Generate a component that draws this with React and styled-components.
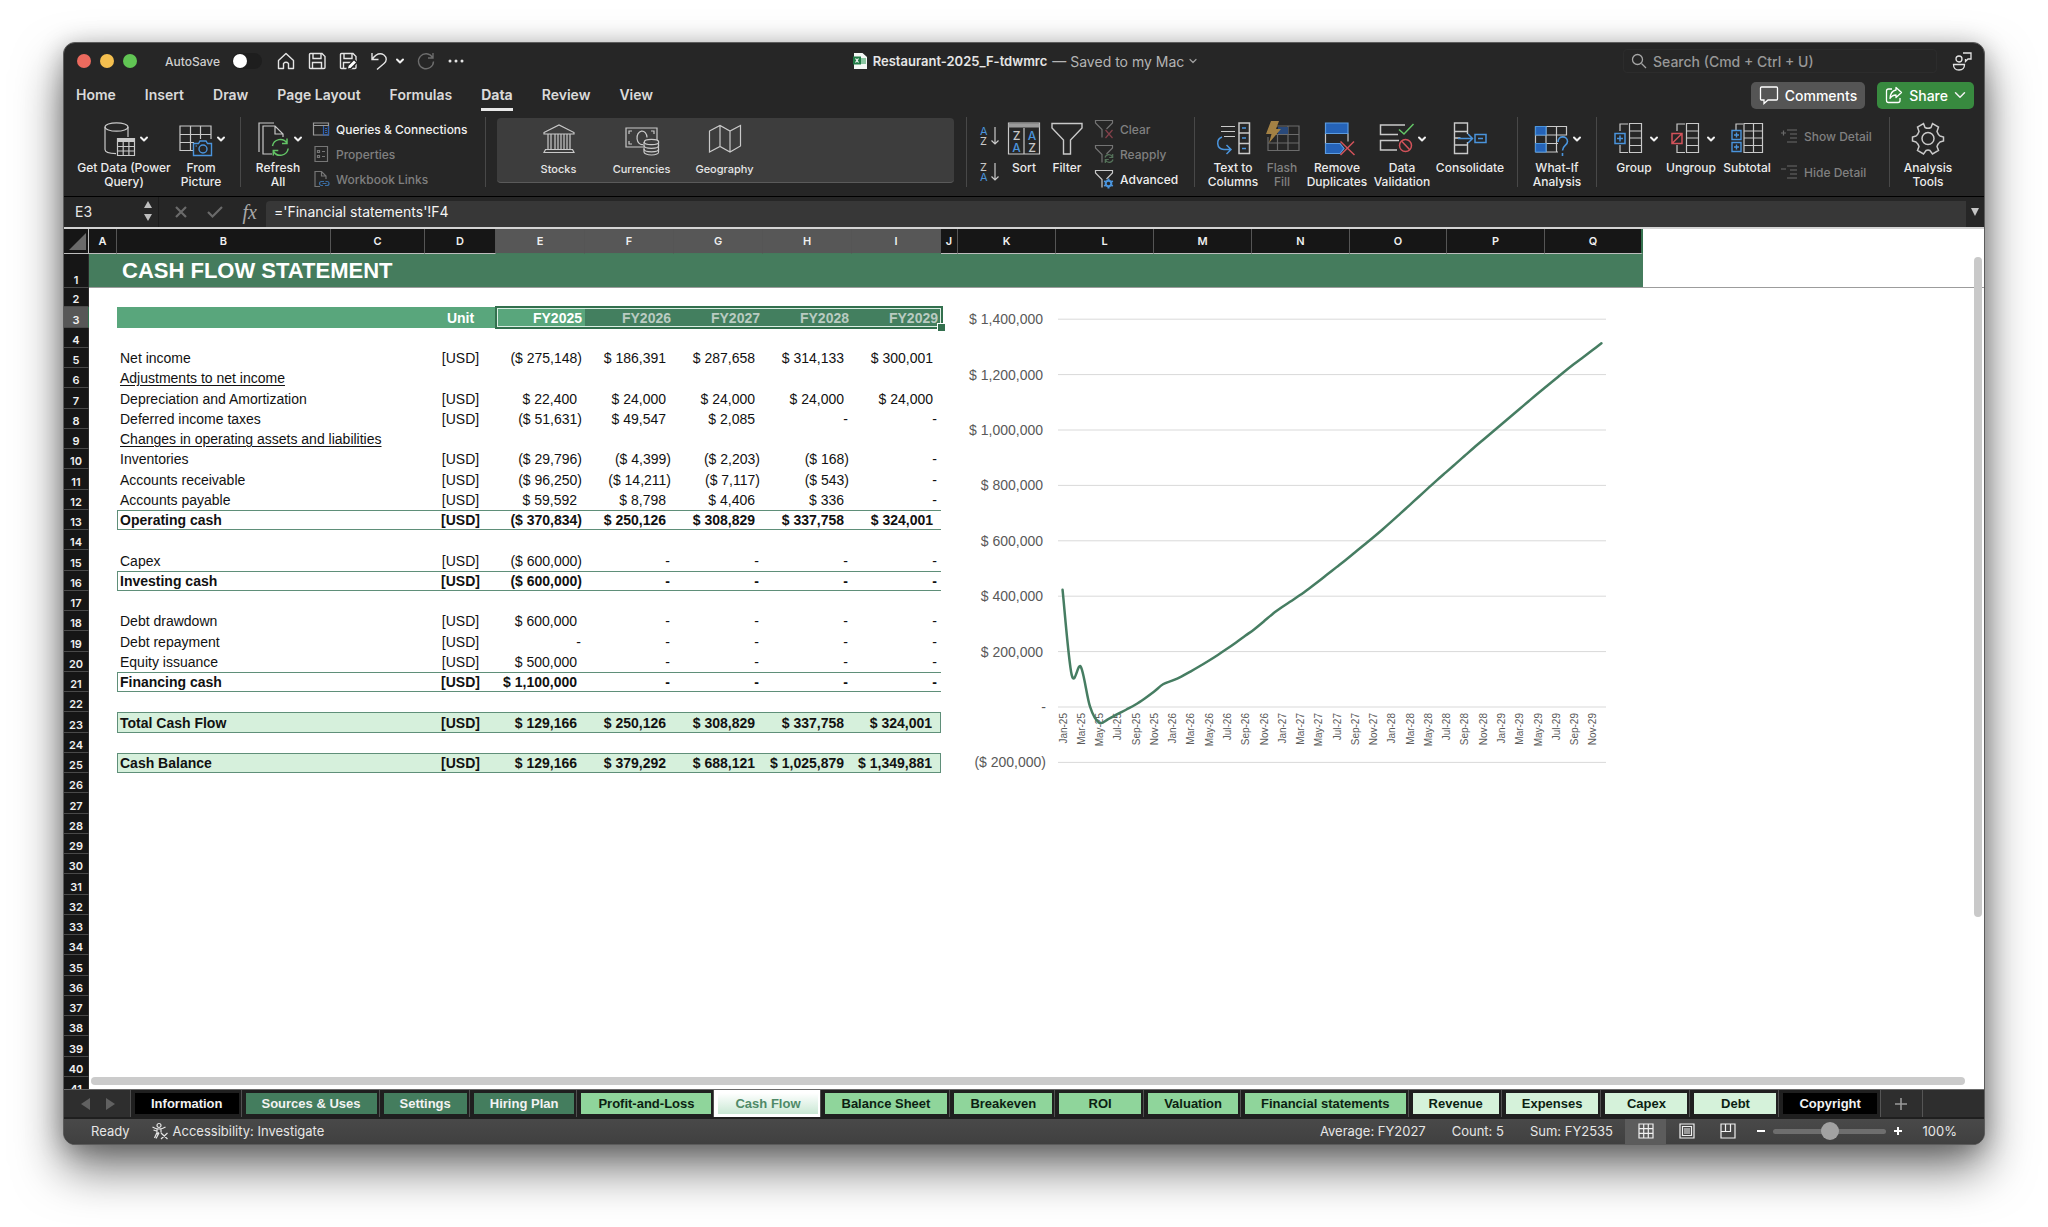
import React, { useState } from "react";
import styled, { createGlobalStyle } from "styled-components";

const UI_FONT = `Inter, "Liberation Sans", sans-serif`;
const CELL_FONT = `"Liberation Sans", Arial, sans-serif`;

const LINE = "#c9c9c9";
const BLUE = "#4a94dc";
const GREEN = "#63c466";
const RED = "#d2525a";

const ribbonTabs = [
  "Home",
  "Insert",
  "Draw",
  "Page Layout",
  "Formulas",
  "Data",
  "Review",
  "View",
];

const columns = [
  ["A", 28],
  ["B", 214],
  ["C", 94],
  ["D", 71],
  ["E", 89],
  ["F", 89],
  ["G", 89],
  ["H", 89],
  ["I", 89],
  ["J", 17],
  ["K", 98],
  ["L", 98],
  ["M", 98],
  ["N", 98],
  ["O", 97],
  ["P", 98],
  ["Q", 98],
];

const selectedColumns = "EFGHI";

const years = ["FY2025", "FY2026", "FY2027", "FY2028", "FY2029"];

const statement = {
  5: {
    label: "Net income",
    values: ["($ 275,148)", "$ 186,391", "$ 287,658", "$ 314,133", "$ 300,001"],
  },
  6: { label: "Adjustments to net income", kind: "heading" },
  7: {
    label: "Depreciation and Amortization",
    values: ["$ 22,400", "$ 24,000", "$ 24,000", "$ 24,000", "$ 24,000"],
  },
  8: {
    label: "Deferred income taxes",
    values: ["($ 51,631)", "$ 49,547", "$ 2,085", "-", "-"],
  },
  9: { label: "Changes in operating assets and liabilities", kind: "heading" },
  10: {
    label: "Inventories",
    values: ["($ 29,796)", "($ 4,399)", "($ 2,203)", "($ 168)", "-"],
  },
  11: {
    label: "Accounts receivable",
    values: ["($ 96,250)", "($ 14,211)", "($ 7,117)", "($ 543)", "-"],
  },
  12: {
    label: "Accounts payable",
    values: ["$ 59,592", "$ 8,798", "$ 4,406", "$ 336", "-"],
  },
  13: {
    label: "Operating cash",
    kind: "subtotal",
    values: ["($ 370,834)", "$ 250,126", "$ 308,829", "$ 337,758", "$ 324,001"],
  },
  15: { label: "Capex", values: ["($ 600,000)", "-", "-", "-", "-"] },
  16: {
    label: "Investing cash",
    kind: "subtotal",
    values: ["($ 600,000)", "-", "-", "-", "-"],
  },
  18: { label: "Debt drawdown", values: ["$ 600,000", "-", "-", "-", "-"] },
  19: { label: "Debt repayment", values: ["-", "-", "-", "-", "-"] },
  20: { label: "Equity issuance", values: ["$ 500,000", "-", "-", "-", "-"] },
  21: {
    label: "Financing cash",
    kind: "subtotal",
    values: ["$ 1,100,000", "-", "-", "-", "-"],
  },
  23: {
    label: "Total Cash Flow",
    kind: "total",
    values: ["$ 129,166", "$ 250,126", "$ 308,829", "$ 337,758", "$ 324,001"],
  },
  25: {
    label: "Cash Balance",
    kind: "total",
    values: [
      "$ 129,166",
      "$ 379,292",
      "$ 688,121",
      "$ 1,025,879",
      "$ 1,349,881",
    ],
  },
};

const sheets = [
  { name: "Information", tone: "black" },
  { name: "Sources & Uses", tone: "dark" },
  { name: "Settings", tone: "dark" },
  { name: "Hiring Plan", tone: "dark" },
  { name: "Profit-and-Loss", tone: "mid", roomy: true },
  { name: "Cash Flow", tone: "active", roomy: true },
  { name: "Balance Sheet", tone: "mid", roomy: true },
  { name: "Breakeven", tone: "mid" },
  { name: "ROI", tone: "mid" },
  { name: "Valuation", tone: "mid" },
  { name: "Financial statements", tone: "mid" },
  { name: "Revenue", tone: "light" },
  { name: "Expenses", tone: "light" },
  { name: "Capex", tone: "light" },
  { name: "Debt", tone: "light" },
  { name: "Copyright", tone: "black" },
];

// monthly cash balance, thousands of dollars, Jan-25 to Dec-29
const balance = [
  423, 116, 145, 2, -57, -44, -26, -9, 9, 31, 55, 82, 95, 110, 128, 147, 167,
  188, 210, 233, 257, 281, 308, 336, 360, 382, 404, 428, 453, 479, 505, 531,
  558, 585, 612, 640, 669, 699, 729, 759, 789, 819, 848, 877, 906, 935, 963,
  991, 1019, 1047, 1075, 1103, 1131, 1158, 1185, 1212, 1238, 1263, 1288, 1313,
];

const axisLabels = [
  "$ 1,400,000",
  "$ 1,200,000",
  "$ 1,000,000",
  "$ 800,000",
  "$ 600,000",
  "$ 400,000",
  "$ 200,000",
  "-",
  "($ 200,000)",
];

/* ---------- icons ---------- */

const Chevron = ({ size = 8, color = "#f0f0f0", weight = 2 }) => (
  <svg width={size} height={size} viewBox="0 0 8 8" fill="none">
    <path
      d="M1 2.5 4 5.5 7 2.5"
      stroke={color}
      strokeWidth={weight}
      strokeLinecap="round"
      strokeLinejoin="round"
    />
  </svg>
);

const Icon = ({ w = 34, h = 34, children, color = LINE, weight = 1.2 }) => (
  <svg
    width={w}
    height={h}
    viewBox={`0 0 ${w} ${h}`}
    fill="none"
    stroke={color}
    strokeWidth={weight}
    aria-hidden="true"
  >
    {children}
  </svg>
);

const GetDataIcon = () => (
  <Icon>
    <ellipse cx="15.5" cy="5" rx="11.5" ry="4.2" />
    <path d="M4 5v22.500c0 2.200 4 4 11 4.200M27 5v10" />
    <path d="M16.500 16.500h17v17h-17z" fill="#262626" />
    <path d="M16.500 18.500h17" strokeWidth="3" />
    <path d="M16.500 24.500h17M16.500 29h17M22.200 18v15M27.900 18v15" />
  </Icon>
);

const FromPictureIcon = () => (
  <Icon>
    <path d="M15 28.500H2V4h31v13M2 12.500h31M2 20.500h14M12.500 4v24.500M22.500 4v13" />
    <path
      d="M15.500 21.500h5l1.500-2.500h6l1.500 2.500h4v12h-18z"
      stroke={BLUE}
      fill="#262626"
      strokeWidth="1.400"
    />
    <circle cx="25" cy="27" r="4" stroke={BLUE} strokeWidth="1.400" />
    <path d="M17.500 24h1.500" stroke={BLUE} />
  </Icon>
);

const RefreshIcon = () => (
  <Icon>
    <path d="M4 30V1h15" />
    <path d="M17 32H8V4h12l8 8v3M20 4v8h8" />
    <path
      d="M17.500 24a8 8 0 0 1 14.500-3M32 16.500v5h-5M33.200 26.500a8 8 0 0 1-14.700 3M18.300 33.500v-5h5"
      stroke={GREEN}
      strokeWidth="1.500"
    />
  </Icon>
);

const QueriesIcon = () => (
  <Icon w={18} h={18} color="#9a9a9a">
    <path d="M1.500 3h15v12h-15zM1.500 5.500h15" />
    <path
      d="M11.500 6v9h5V6M13 8.500h2M13 10.500h2M13 12.500h2"
      stroke="#2f62b4"
    />
  </Icon>
);

const PropertiesIcon = () => (
  <Icon w={18} h={18} color="#767676">
    <path d="M3 1.500h12.500v15H3z" />
    <path d="M5.500 5.500h2v2h-2zM5.500 10.500h2v2h-2zM10 6.500h3M10 11.500h3" />
  </Icon>
);

const LinksIcon = () => (
  <Icon w={18} h={18} color="#767676">
    <path d="M8 16.500H3v-15h6.500l4.500 4.500v3M9.500 1.500V6H14" />
    <path
      d="M11 15.500H9.500a2 2 0 0 1 0-4h2.500M13.500 11.500h1.500a2 2 0 0 1 0 4H13M10.500 13.500h4"
      stroke="#3a6ea5"
    />
  </Icon>
);

const StocksIcon = () => (
  <Icon>
    <path d="M2 10.500 17 3l15 7.500v1.500H2zM3.500 27.500h27l1.500 3H2z" />
    <path d="M6 12v15.500M9 12v15.500M13 12v15.500M16 12v15.500M19 12v15.500M22 12v15.500M25 12v15.500M28 12v15.500" />
  </Icon>
);

const CurrencyIcon = () => (
  <Icon>
    <path d="M18 25H1V6h31v12" />
    <path d="M4 12V9h3M4 19v3h3M26 9h3v3" />
    <path d="M18 22.500a5 6.800 0 1 1 4-7" />
    <path
      d="M19 20v10c0 1.500 3 3 7.500 3s7.500-1.500 7-3V20"
      fill="#3d3d3d"
    />
    <ellipse cx="26.500" cy="20" rx="7.200" ry="2.700" fill="#3d3d3d" />
    <path d="M19 23.500c0 1.500 3 2.800 7.500 2.800s7.200-1.300 7.200-2.800M19 27c0 1.500 3 2.800 7.500 2.800s7.200-1.300 7.200-2.800" />
  </Icon>
);

const MapIcon = () => (
  <Icon>
    <path d="M1.500 9 12 3.500l10 5.500L32.500 3.500V24L22 30l-10-5.500L1.500 30zM12 3.500v21M22 9v21" />
  </Icon>
);

const SortAzIcon = ({ top, bottom, flip }) => (
  <svg width="20" height="22" viewBox="0 0 20 22" fill="none">
    <text
      x="0"
      y="9"
      fontSize="11"
      fontFamily="Inter, sans-serif"
      fill={flip ? LINE : BLUE}
    >
      {top}
    </text>
    <text
      x="0"
      y="19"
      fontSize="11"
      fontFamily="Inter, sans-serif"
      fill={flip ? BLUE : LINE}
    >
      {bottom}
    </text>
    <path d="M15 1v17M11.500 14.500 15 18l3.500-3.500" stroke={LINE} strokeWidth="1.200" />
  </svg>
);

const SortIcon = () => (
  <Icon>
    <path d="M1.500 1h31v31h-31zM17 6v26" />
    <path d="M1.500 3.500h31" strokeWidth="4" stroke="#9b9b9b" />
    <g
      stroke="none"
      fontSize="12"
      fontFamily="Inter, sans-serif"
      textAnchor="middle"
    >
      <text x="9.500" y="18" fill={LINE}>
        Z
      </text>
      <text x="9.500" y="30" fill={BLUE}>
        A
      </text>
      <text x="25" y="18" fill={BLUE}>
        A
      </text>
      <text x="25" y="30" fill={LINE}>
        Z
      </text>
    </g>
  </Icon>
);

const FilterIcon = () => (
  <Icon weight={1.4}>
    <path d="M2 1.500h30v4.500L20.500 18v14h-7V18L2 6z" />
  </Icon>
);

const SmallFilterIcon = ({ mark, dim }) => (
  <Icon w={20} h={20} color={dim ? "#747474" : LINE}>
    <path d="M8 18.500V10.500L1.500 4V1.500h17V4l-6 6" />
    {mark === "clear" && (
      <path d="m11.500 11 7 8M18.500 11l-7 8" stroke="#84404a" />
    )}
    {mark === "reapply" && (
      <path
        d="M11 13.500a4 4 0 0 1 7.500-.5M18.700 10v3.500h-3.500M19 15.500a4 4 0 0 1-7.500.5M11.300 19v-3.500h3.500"
        stroke="#55735a"
      />
    )}
    {mark === "gear" && (
      <g stroke={BLUE}>
        <circle cx="14.500" cy="14.500" r="2.800" strokeWidth="2" />
        <path
          d="M14.500 9.500v2M14.500 17.500v2M10.200 12l1.700 1M17.100 16l1.700 1M18.800 12l-1.700 1M11.900 16l-1.700 1"
          strokeWidth="2"
        />
      </g>
    )}
  </Icon>
);

const TextToColumnsIcon = () => (
  <Icon>
    <path d="M5 4.500h14M5 9.500h14M8 14.500h11" />
    <path d="M23 1h10.500v30.500H23zM23 11h10.500M23 21.500h10.500" strokeWidth="1.500" />
    <path
      d="M6 15c-6 2-6 12 2 12.500h6M10.500 23l4.500 4.500-4.500 4.500M26 6h4M26 16h4M26 26.500h4"
      stroke={BLUE}
      strokeWidth="1.500"
    />
  </Icon>
);

const FlashFillIcon = () => (
  <Icon color="#6b6b6b">
    <path d="M11 4h23v24.500H3V15M3 21h31M8 12.500h26M12.500 12v16.500M23 4v24.500" />
    <path d="M13 5h10v7H13z" fill="#29497a" stroke="none" />
    <path
      d="M6-1h8l-3 8h5L4 21l2.500-9H1z"
      fill="#a38144"
      stroke="none"
    />
  </Icon>
);

const RemoveDuplicatesIcon = () => (
  <Icon>
    <path d="M5.500 11.500v10M28 11.500v8" />
    <path
      d="M5.500 1H28v10.500H5.500zM5.500 21.500H20l4 5-4 5H5.500z"
      fill="#2563b8"
      stroke="#5b9be0"
    />
    <path d="m20.500 19.500 14 13.500M34 19.500 20.500 33" stroke={RED} strokeWidth="1.500" />
  </Icon>
);

const DataValidationIcon = () => (
  <Icon>
    <path d="M19 12.500H1.500V3H26M18 28H1.500v-9.500H20" strokeWidth="1.500" />
    <path d="m20 7.500 5 4.500L34.500 2" stroke={GREEN} strokeWidth="1.500" />
    <circle cx="26.500" cy="23.500" r="6" stroke={RED} strokeWidth="1.500" />
    <path d="m22.500 19 8.500 9" stroke={RED} strokeWidth="1.500" />
  </Icon>
);

const ConsolidateIcon = () => (
  <Icon>
    <path d="M1.500 1h13v8.500h-13zM1.500 23h13v8.500h-13zM8 9.500h6.500V12M8 23h6.500v-3M1.500 9.500V23M1.500 16h6" strokeWidth="1.400" />
    <path
      d="M5 16.500h14.500M15 12l4.500 4.500L15 21M22 12.500h11v8H22zM25 16.500h5"
      stroke={BLUE}
      strokeWidth="1.500"
    />
  </Icon>
);

const WhatIfIcon = () => (
  <Icon>
    <path d="M1.500 4.500h31v9M1.500 13h31M1.500 21.500H24M1.500 30H24M12 4.500V30M22.500 4.500V30M1.500 4.500V30" />
    <path d="M1.500 4.500H12V13H1.500zM1.500 21.500H12V30H1.500z" fill="#2563b8" stroke={BLUE} />
    <path
      d="M24 20c0-7 9.500-6.500 9.500-.5 0 4-5 4-5 9M28.500 31v3"
      stroke={BLUE}
      strokeWidth="1.600"
    />
  </Icon>
);

const GroupIcon = ({ removed }) => (
  <Icon>
    <path d="M18.500 1.500h12v29h-12zM18.500 9h12M18.500 16h12M18.500 23.500h12M17 2H9v7M9 23v7.500h8" />
    <path
      d={removed ? "M4 11.500h10v10H4zM4 21.500l10-10" : "M4 11.500h10v10H4zM9 13.500v6M6 16.500h6"}
      stroke={removed ? RED : BLUE}
      strokeWidth="1.500"
    />
  </Icon>
);

const SubtotalIcon = () => (
  <Icon>
    <path d="M14 1.500h18.500v29H14zM14 9h18.500M14 16h18.500M14 23.500h18.500M23.500 1.500v29M13 2H6v6" />
    <path
      d="M2 8.500h9v9H2zM6.500 10.500v5M4 13h5M2 20.500h9v9H2zM6.500 22.500v5M4 25h5"
      stroke={BLUE}
      strokeWidth="1.400"
    />
  </Icon>
);

const DetailIcon = ({ hide }) => (
  <Icon w={18} h={16} color="#6a6a6a">
    <path d="M7 2h10M10 6h7M10 10h7M7 14h10M1 5h5" />
    {!hide && <path d="M3.500 2.500v5" />}
  </Icon>
);

const GearIcon = () => (
  <Icon weight={1.5}>
    <circle cx="17" cy="16.500" r="6" />
    <path d="m12.500 1.500 1.500 4q3 1.500 6 0l1.500-4 6 3.500-1.500 4.500q1 3 3 4.500l3.500 1v4l-3.500 1q-2 1.500-3 4.500l1.500 4-6 3.500-2.500-3.500q-2-1-4 0L12.500 32l-6-3.500 1.500-4q-1-3-3-4.500l-3.500-1v-4l3.500-1q2-1.500 3-4.500L6.500 5z" />
  </Icon>
);

const HomeIcon = () => (
  <Icon w={18} h={18} color="#e4e4e4" weight={1.4}>
    <path d="M1.500 8.500 9 1.500l7.500 7v8h-5v-5q-2.500-2.500-5 0v5h-5z" strokeLinejoin="round" />
  </Icon>
);

const SaveIcon = ({ edit }) => (
  <Icon w={18} h={18} color="#e4e4e4" weight={1.4}>
    <path d="M1.500 2.500q0-1 1-1h11.500l3 3v11q0 1-1 1H2.500q-1 0-1-1zM5 1.500v5h8v-5M4.500 16.500V10.500h9v6" />
    {edit && (
      <path d="m8 17.500 1-4 6-6 3 3-6 6z" fill="#fff" stroke="#262626" />
    )}
  </Icon>
);

const UndoIcon = () => (
  <Icon w={18} h={18} color="#e4e4e4" weight={1.4}>
    <path d="M2 1v6.500h6.500M2 7.500C6 2 10 .5 14 3c3 2.500 3 6 0 8.500l-7 6" />
  </Icon>
);

const RedoIcon = () => (
  <Icon w={18} h={18} color="#6c6c6c" weight={1.4}>
    <path d="M16 1v5h-5M15.500 5.500A7.500 7.500 0 1 0 16.500 9.500" />
  </Icon>
);

const MoreIcon = () => (
  <Icon w={16} h={18} color="none">
    <g fill="#e4e4e4">
      <circle cx="2" cy="9" r="1.500" />
      <circle cx="8" cy="9" r="1.500" />
      <circle cx="14" cy="9" r="1.500" />
    </g>
  </Icon>
);

const WorkbookIcon = () => (
  <svg width="16" height="18" viewBox="0 0 16 18">
    <path d="M2 1h8.500L15 5v12H2z" fill="#f4f8f5" />
    <path d="M9 6h5v6H9z" fill="#8cc7a2" />
    <path d="M1 4.500h8v8H1z" fill="#1f7a45" />
    <path d="m3.500 6.500 3 4M6.500 6.500l-3 4" stroke="#fff" strokeWidth="1.200" />
  </svg>
);

const SearchIcon = () => (
  <Icon w={16} h={16} color="#a5a5a5" weight={1.3}>
    <circle cx="6.500" cy="6.500" r="5" />
    <path d="m10.500 10.500 4.500 4.500" />
  </Icon>
);

const PresenceIcon = () => (
  <Icon w={20} h={20} color="#e4e4e4" weight={1.3}>
    <circle cx="7" cy="8" r="3" />
    <path d="M1.500 13.500h11q0 5.500-5.500 5.500t-5.500-5.500zM11 2h8v6h-3l-2.500 2.500V8" />
  </Icon>
);

const CommentIcon = () => (
  <Icon w={20} h={20} color="#fff" weight={1.3}>
    <path d="M2.500 2h15q1 0 1 1v11q0 1-1 1H9l-4 3.500V15H2.500q-1 0-1-1V3q0-1 1-1z" />
  </Icon>
);

const ShareIcon = () => (
  <Icon w={18} h={18} color="#fff" weight={1.3}>
    <path d="M7 3H3.500Q1.500 3 1.500 5v9.500q0 2 2 2H13q2 0 2-2V12" />
    <path d="M11 1.500 16.500 6.500 11 11.500V9q-4 0-6 3.500Q5.500 5 11 4z" strokeLinejoin="round" />
  </Icon>
);

const AccessibilityIcon = () => (
  <Icon w={18} h={18} color="#e4e4e4">
    <circle cx="8" cy="3.500" r="2" />
    <path d="M1.500 5q3 2 6.500 2t6.500-2M6 7v3.500L3.500 16M10 7v3.500M2.500 8l3 1M6 12l2-1.500M10 11l6.500 6M16.500 11 10 17M5 16.500 8 11" />
  </Icon>
);

const ViewIcon = ({ kind }) => (
  <Icon w={16} h={16} color="#f0f0f0">
    <path d="M1 1h14v14H1z" />
    {kind === "normal" && (
      <path d="M5.700 1v14M10.300 1v14M1 5.700h14M1 10.300h14" />
    )}
    {kind === "layout" && (
      <path d="M3.500 3.500h9v9h-9zM5 6h6M5 8h6M5 10h6" />
    )}
    {kind === "break" && <path d="M5.500 1v7.500M1 8.500h9.500V1" />}
  </Icon>
);

/* ---------- chart ---------- */

const PLOT = { left: 101, right: 649, zero: 403, step: 55.4 };

const monthName = (i) =>
  ["Jan", "Mar", "May", "Jul", "Sep", "Nov"][(i / 2) % 6] +
  "-" +
  (25 + Math.floor(i / 12));

const monthX = (i) =>
  PLOT.left + ((i + 0.5) * (PLOT.right - PLOT.left)) / balance.length;

function smoothLine() {
  const pts = balance.map((v, i) => [
    monthX(i),
    PLOT.zero - (v / 200) * PLOT.step,
  ]);
  let d = `M${pts[0][0]} ${pts[0][1]}`;
  for (let i = 0; i < pts.length - 1; i++) {
    const p0 = pts[i - 1] || pts[i];
    const p1 = pts[i];
    const p2 = pts[i + 1];
    const p3 = pts[i + 2] || p2;
    const c1 = [p1[0] + (p2[0] - p0[0]) / 6, p1[1] + (p2[1] - p0[1]) / 6];
    const c2 = [p2[0] - (p3[0] - p1[0]) / 6, p2[1] - (p3[1] - p1[1]) / 6];
    d += ` C${c1[0]} ${c1[1]} ${c2[0]} ${c2[1]} ${p2[0]} ${p2[1]}`;
  }
  return d;
}

function BalanceChart() {
  return (
    <Chart viewBox="0 0 660 480" role="img" aria-label="Cash balance by month">
      {axisLabels.map((label, i) => {
        const y = PLOT.zero + (i - 7) * PLOT.step;
        return (
          <g key={label}>
            <line x1={PLOT.left} x2={PLOT.right} y1={y} y2={y} />
            <text
              className="amount"
              x={label.startsWith("(") || label === "-" ? 89 : 86}
              y={y + 5}
            >
              {label}
            </text>
          </g>
        );
      })}
      {balance.map(
        (_, i) =>
          i % 2 === 0 && (
            <text
              key={i}
              className="month"
              transform={`translate(${monthX(i) + 4} ${PLOT.zero + 6}) rotate(-90)`}
            >
              {monthName(i)}
            </text>
          ),
      )}
      <path d={smoothLine()} />
    </Chart>
  );
}

/* ---------- ribbon pieces ---------- */

function Command({ icon, label, width, menu, disabled }) {
  return (
    <CommandButton type="button" $width={width} disabled={disabled}>
      <span className="icon">
        {icon}
        {menu && <Chevron />}
      </span>
      <span>{label}</span>
    </CommandButton>
  );
}

function Option({ icon, label, disabled }) {
  return (
    <OptionButton type="button" disabled={disabled}>
      {icon}
      {label}
    </OptionButton>
  );
}

function TitleBar() {
  return (
    <TitleRow>
      <Cluster>
        <Lights>
          <Light aria-label="Close" $color="#ec6a5e" />
          <Light aria-label="Minimise" $color="#f4bf4f" />
          <Light aria-label="Zoom" $color="#61c554" />
        </Lights>
        <AutoSave>
          AutoSave
          <input type="checkbox" role="switch" />
        </AutoSave>
        <QuickBar>
          <IconButton aria-label="Home">
            <HomeIcon />
          </IconButton>
          <IconButton aria-label="Save">
            <SaveIcon />
          </IconButton>
          <IconButton aria-label="Save as">
            <SaveIcon edit />
          </IconButton>
          <IconButton aria-label="Undo">
            <UndoIcon />
            <Chevron />
          </IconButton>
          <IconButton aria-label="Redo" disabled>
            <RedoIcon />
          </IconButton>
          <IconButton aria-label="More">
            <MoreIcon />
          </IconButton>
        </QuickBar>
      </Cluster>
      <DocumentTitle>
        <WorkbookIcon />
        Restaurant-2025_F-tdwmrc
        <span>— Saved to my Mac</span>
        <Chevron color="#a0a0a0" weight={1.2} />
      </DocumentTitle>
      <Cluster $end>
        <SearchBox>
          <SearchIcon />
          <input type="search" aria-label="Search" placeholder="Search (Cmd + Ctrl + U)" />
        </SearchBox>
        <IconButton aria-label="People">
          <PresenceIcon />
        </IconButton>
      </Cluster>
    </TitleRow>
  );
}

function Ribbon() {
  return (
    <RibbonRow>
      <Group>
        <Command icon={<GetDataIcon />} label="Get Data (Power Query)" width={94} menu />
        <Command icon={<FromPictureIcon />} label="From Picture" width={60} menu />
      </Group>
      <Group>
        <Command icon={<RefreshIcon />} label="Refresh All" width={56} menu />
        <OptionList $width={170}>
          <Option icon={<QueriesIcon />} label="Queries & Connections" />
          <Option icon={<PropertiesIcon />} label="Properties" disabled />
          <Option icon={<LinksIcon />} label="Workbook Links" disabled />
        </OptionList>
      </Group>
      <Group $grow>
        <Gallery>
          <DataType>
            <StocksIcon />
            Stocks
          </DataType>
          <DataType>
            <CurrencyIcon />
            Currencies
          </DataType>
          <DataType>
            <MapIcon />
            Geography
          </DataType>
        </Gallery>
      </Group>
      <Group>
        <SortColumn>
          <IconButton aria-label="Sort ascending">
            <SortAzIcon top="A" bottom="Z" />
          </IconButton>
          <IconButton aria-label="Sort descending">
            <SortAzIcon top="Z" bottom="A" flip />
          </IconButton>
        </SortColumn>
        <Command icon={<SortIcon />} label="Sort" width={44} />
        <Command icon={<FilterIcon />} label="Filter" width={42} />
        <OptionList $width={97}>
          <Option icon={<SmallFilterIcon mark="clear" dim />} label="Clear" disabled />
          <Option icon={<SmallFilterIcon mark="reapply" dim />} label="Reapply" disabled />
          <Option icon={<SmallFilterIcon mark="gear" />} label="Advanced" />
        </OptionList>
      </Group>
      <Group>
        <Command icon={<TextToColumnsIcon />} label="Text to Columns" width={58} />
        <Command icon={<FlashFillIcon />} label="Flash Fill" width={40} disabled />
        <Command icon={<RemoveDuplicatesIcon />} label="Remove Duplicates" width={70} />
        <Command icon={<DataValidationIcon />} label="Data Validation" width={60} menu />
        <Command icon={<ConsolidateIcon />} label="Consolidate" width={76} />
      </Group>
      <Group>
        <Command icon={<WhatIfIcon />} label="What-If Analysis" width={60} menu />
      </Group>
      <Group>
        <Command icon={<GroupIcon />} label="Group" width={56} menu />
        <Command icon={<GroupIcon removed />} label="Ungroup" width={58} menu />
        <Command icon={<SubtotalIcon />} label="Subtotal" width={54} />
        <OptionList $width={106} $spread>
          <Option icon={<DetailIcon />} label="Show Detail" disabled />
          <Option icon={<DetailIcon hide />} label="Hide Detail" disabled />
        </OptionList>
      </Group>
      <Group>
        <Command icon={<GearIcon />} label="Analysis Tools" width={58} />
      </Group>
    </RibbonRow>
  );
}

/* ---------- sheet ---------- */

const align = (value) => {
  if (value === "-") return "dash";
  return value.startsWith("(") ? "negative" : "positive";
};

function SheetRow({ number }) {
  const row = statement[number];
  const values = (row && row.values) || [];

  if (number === 1) {
    return (
      <BannerRow>
        <RowHead scope="row">1</RowHead>
        <td />
        <td colSpan={16}>CASH FLOW STATEMENT</td>
        <td />
      </BannerRow>
    );
  }

  if (number === 3) {
    return (
      <YearRow>
        <RowHead scope="row" $selected>
          3
        </RowHead>
        <td />
        <YearCell colSpan={2} />
        <YearCell $center>Unit</YearCell>
        {years.map((year, i) => (
          <YearCell key={year} $selected={i > 0}>
            {year}
            {i === 0 && <Selection />}
          </YearCell>
        ))}
        <td colSpan={9} />
      </YearRow>
    );
  }

  return (
    <Row $number={number}>
      <RowHead scope="row">{number}</RowHead>
      <td />
      {row ? (
        <>
          <Cell colSpan={2} $kind={row.kind} $first>
            {row.label}
          </Cell>
          <Cell $kind={row.kind} $align="center">
            {row.values && "[USD]"}
          </Cell>
          {years.map((year, i) => (
            <Cell
              key={year}
              $kind={row.kind}
              $align={values[i] && align(values[i])}
              $last={i === 4}
            >
              {values[i]}
            </Cell>
          ))}
          <td colSpan={9} />
        </>
      ) : (
        <td colSpan={17} />
      )}
    </Row>
  );
}

function Sheet() {
  return (
    <SheetArea>
      <SheetTable>
        <colgroup>
          <col width="25" />
          {columns.map(([name, width]) => (
            <col key={name} width={width} />
          ))}
          <col />
        </colgroup>
        <thead>
          <tr>
            <Corner aria-label="Select all">
              <svg width="24" height="24" viewBox="0 0 24 24">
                <path d="M22 4v17H5z" fill="#6a6a6a" />
              </svg>
            </Corner>
            {columns.map(([name]) => (
              <ColumnHead
                key={name}
                scope="col"
                $selected={selectedColumns.includes(name)}
                $last={name === "Q"}
              >
                {name}
              </ColumnHead>
            ))}
            <td />
          </tr>
        </thead>
        <tbody>
          {Array.from({ length: 41 }, (_, i) => (
            <SheetRow key={i} number={i + 1} />
          ))}
        </tbody>
      </SheetTable>
      <BalanceChart />
      <VerticalScroll />
      <HorizontalScroll />
    </SheetArea>
  );
}

function App() {
  const [sheet, setSheet] = useState("Cash Flow");
  const [zoom, setZoom] = useState(100);

  return (
    <>
      <GlobalStyle />
      <Desktop>
        <Window>
          <TitleBar />
          <TabRow>
            {ribbonTabs.map((tab) => (
              <RibbonTab key={tab} type="button" $active={tab === "Data"}>
                {tab}
              </RibbonTab>
            ))}
            <Spacer />
            <Actions>
              <ActionButton type="button">
                <CommentIcon />
                Comments
              </ActionButton>
              <ActionButton type="button" $primary>
                <ShareIcon />
                Share
                <Chevron size={12} weight={1} />
              </ActionButton>
            </Actions>
          </TabRow>
          <Ribbon />
          <FormulaRow>
            <NameBox>
              <input aria-label="Name box" defaultValue="E3" />
              <svg width="10" height="22" viewBox="0 0 10 22" fill="#bdbdbd">
                <path d="M5 1 9 8H1zM5 21 1 14h8z" />
              </svg>
            </NameBox>
            <FormulaTools>
              <IconButton aria-label="Cancel" disabled>
                <Icon w={12} h={12} color="#6a6a6a" weight={2.2}>
                  <path d="m1 1 10 10M11 1 1 11" />
                </Icon>
              </IconButton>
              <IconButton aria-label="Enter" disabled>
                <Icon w={16} h={12} color="#6a6a6a" weight={2.2}>
                  <path d="m1 6 4.500 4.500L15 1" />
                </Icon>
              </IconButton>
              <FxButton type="button">fx</FxButton>
            </FormulaTools>
            <FormulaInput
              aria-label="Formula"
              defaultValue="='Financial statements'!F4"
            />
            <IconButton aria-label="Expand formula bar">
              <svg width="10" height="8" viewBox="0 0 10 8" fill="#c4c4c4">
                <path d="M1 0h8L5 8z" />
              </svg>
            </IconButton>
          </FormulaRow>
          <Sheet />
          <SheetBar>
            <SheetNav>
              <IconButton aria-label="Previous sheet">
                <svg width="9" height="12" viewBox="0 0 9 12" fill="#616161">
                  <path d="M9 0v12L0 6z" />
                </svg>
              </IconButton>
              <IconButton aria-label="Next sheet">
                <svg width="9" height="12" viewBox="0 0 9 12" fill="#616161">
                  <path d="M0 0v12l9-6z" />
                </svg>
              </IconButton>
            </SheetNav>
            {sheets.map(({ name, tone, roomy }) => (
              <SheetTab
                key={name}
                type="button"
                $tone={tone}
                $roomy={roomy}
                aria-pressed={name === sheet}
                onClick={() => setSheet(name)}
              >
                {name}
              </SheetTab>
            ))}
            <AddSheet type="button" aria-label="Add sheet">
              <Icon w={12} h={12} color="#9a9a9a" weight={1.6}>
                <path d="M6 0v12M0 6h12" />
              </Icon>
            </AddSheet>
          </SheetBar>
          <StatusBar>
            <span>Ready</span>
            <StatusButton type="button">
              <AccessibilityIcon />
              Accessibility: Investigate
            </StatusButton>
            <Spacer />
            <Stats>
              <span>Average: FY2027</span>
              <span>Count: 5</span>
              <span>Sum: FY2535</span>
            </Stats>
            <ViewButton type="button" aria-label="Normal view" $active>
              <ViewIcon kind="normal" />
            </ViewButton>
            <ViewButton type="button" aria-label="Page layout">
              <ViewIcon kind="layout" />
            </ViewButton>
            <ViewButton type="button" aria-label="Page break preview">
              <ViewIcon kind="break" />
            </ViewButton>
            <ZoomControl>
              <IconButton aria-label="Zoom out" onClick={() => setZoom(zoom - 10)}>
                <Icon w={10} h={10} color="#fff" weight={2}>
                  <path d="M1 5h8" />
                </Icon>
              </IconButton>
              <input
                type="range"
                aria-label="Zoom"
                min="0"
                max="200"
                value={zoom}
                onChange={(e) => setZoom(Number(e.target.value))}
              />
              <IconButton aria-label="Zoom in" onClick={() => setZoom(zoom + 10)}>
                <Icon w={10} h={10} color="#fff" weight={2}>
                  <path d="M1 5h8M5 1v8" />
                </Icon>
              </IconButton>
            </ZoomControl>
            <ZoomValue>{zoom}%</ZoomValue>
          </StatusBar>
        </Window>
      </Desktop>
    </>
  );
}

export default App;

const GlobalStyle = createGlobalStyle`
  * {
    box-sizing: border-box;
  }

  body {
    margin: 0;
    background: #ffffff;
    font-family: ${UI_FONT};
  }

  button,
  input {
    font: inherit;
    color: inherit;
    margin: 0;
    padding: 0;
    border: 0;
    background: none;
    outline: none;
  }

  svg {
    display: block;
    flex: none;
    overflow: visible;
  }
`;

const Desktop = styled.div`
  height: 100vh;
  padding: 42px 63px 82px;
`;

const Window = styled.main`
  height: 100%;
  display: flex;
  flex-direction: column;
  overflow: hidden;
  border: 1px solid #5c5c5c;
  border-radius: 12px;
  background: #262626;
  color: #e6e6e6;
  box-shadow:
    0 24px 48px rgba(0, 0, 0, 0.54),
    0 4px 24px rgba(0, 0, 0, 0.25);
`;

const Spacer = styled.div`
  flex: 1;
`;

const IconButton = styled.button.attrs({ type: "button" })`
  display: flex;
  align-items: center;
  gap: 8px;
`;

const TitleRow = styled.header`
  height: 36px;
  flex: none;
  display: grid;
  grid-template-columns: 1fr auto 1fr;
  align-items: center;
  padding: 0 12px 0 13px;
`;

const Cluster = styled.div`
  display: flex;
  align-items: center;
  justify-content: ${(p) => (p.$end ? "flex-end" : "flex-start")};
  gap: 15px;
`;

const Lights = styled.div`
  display: flex;
  gap: 9px;
`;

const Light = styled.button.attrs({ type: "button" })`
  width: 14px;
  height: 14px;
  border-radius: 50%;
  background: ${(p) => p.$color};
`;

const AutoSave = styled.label`
  display: flex;
  align-items: center;
  gap: 12px;
  margin-left: 13px;
  font-size: 12px;
  font-weight: 500;
  color: #cfcfcf;

  input {
    appearance: none;
    width: 30px;
    height: 16px;
    padding: 1px;
    border-radius: 8px;
    background: #1e1e1e;
  }

  input::before {
    content: "";
    display: block;
    width: 14px;
    height: 14px;
    border-radius: 50%;
    background: #ffffff;
  }
`;

const QuickBar = styled.div`
  display: flex;
  gap: 13px;
`;

const DocumentTitle = styled.h1`
  display: flex;
  align-items: center;
  gap: 5px;
  margin: 0;
  font-size: 13px;
  font-weight: 600;

  span {
    font-size: 14px;
    font-weight: 400;
    color: #b4b4b4;
  }
`;

const SearchBox = styled.label`
  flex: 0 1 314px;
  height: 24px;
  display: flex;
  align-items: center;
  gap: 6px;
  padding: 0 7px;
  border: 1px solid #2c2c2c;
  border-radius: 4px;
  font-size: 14px;
  font-weight: 500;

  input {
    flex: 1;
  }

  input::placeholder {
    color: #989898;
    opacity: 1;
  }
`;

const TabRow = styled.nav`
  height: 32px;
  flex: none;
  display: flex;
  align-items: center;
  gap: 29px;
  padding: 0 10px 0 12px;
`;

const RibbonTab = styled.button`
  height: 32px;
  padding-top: 2px;
  border-bottom: 3px solid ${(p) => (p.$active ? "#e8e8e8" : "transparent")};
  font-size: 14px;
  font-weight: ${(p) => (p.$active ? 700 : 600)};
  color: #dadada;
`;

const Actions = styled.div`
  display: flex;
  gap: 12px;
`;

const ActionButton = styled.button`
  height: 27px;
  display: flex;
  align-items: center;
  gap: 6px;
  padding: 0 8px;
  border-radius: 5px;
  background: ${(p) => (p.$primary ? "#388a3f" : "#555555")};
  color: #ffffff;
  font-size: 14px;
  font-weight: 500;
`;

const RibbonRow = styled.div`
  height: 85px;
  flex: none;
  display: flex;
  padding: 6px 18px 9px 4px;
`;

const Group = styled.div`
  flex: ${(p) => (p.$grow ? "1" : "none")};
  display: flex;
  padding: 0 9px;

  & + & {
    border-left: 1px solid #484848;
  }
`;

const CommandButton = styled.button`
  width: ${(p) => p.$width}px;
  display: flex;
  flex-direction: column;
  align-items: center;
  gap: 5px;
  padding-top: 5px;
  font-size: 12px;
  font-weight: 500;
  line-height: 14px;
  color: #ececec;

  .icon {
    display: flex;
    align-items: center;
    gap: 5px;
  }

  &:disabled {
    color: #808080;
  }
`;

const OptionList = styled.div`
  width: ${(p) => p.$width}px;
  height: ${(p) => (p.$spread ? "60px" : "74px")};
  display: flex;
  flex-direction: column;
  justify-content: space-between;
  padding-left: 6px;
  margin-top: ${(p) => (p.$spread ? "7px" : "0")};
`;

const OptionButton = styled.button`
  height: 24px;
  display: flex;
  align-items: center;
  gap: 6px;
  font-size: 12px;
  font-weight: 500;
  white-space: nowrap;
  color: #f0f0f0;

  &:disabled {
    color: #808080;
  }
`;

const Gallery = styled.div`
  flex: 1;
  height: 65px;
  display: flex;
  margin: 1px 3px 0 2px;
  padding-left: 20px;
  border-bottom: 1px solid #5a5a5a;
  border-radius: 4px;
  background: #3d3d3d;
`;

const DataType = styled.button.attrs({ type: "button" })`
  width: 83px;
  display: flex;
  flex-direction: column;
  align-items: center;
  gap: 6px;
  padding-top: 4px;
  font-size: 11px;
  font-weight: 500;
  line-height: 14px;
`;

const SortColumn = styled.div`
  width: 26px;
  display: flex;
  flex-direction: column;
  gap: 14px;
  padding: 9px 0 0 4px;
`;

const FormulaRow = styled.div`
  height: 33px;
  flex: none;
  display: flex;
  align-items: stretch;
  padding-right: 4px;
  border-top: 1px solid #000000;
  border-bottom: 2px solid #d4d4d4;
  background: #262626;
`;

const NameBox = styled.div`
  width: 95px;
  display: flex;
  align-items: center;
  justify-content: space-between;
  padding: 0 5px 2px 11px;
  border-right: 1px solid #1c1c1c;
  font-size: 14px;

  input {
    width: 60px;
  }
`;

const FormulaTools = styled.div`
  width: 107px;
  display: flex;
  align-items: center;
  justify-content: space-between;
  padding: 0 9px 1px 16px;
`;

const FxButton = styled.button`
  font-family: "Liberation Serif", serif;
  font-size: 20px;
  font-style: italic;
  line-height: 24px;
  color: #a8a8a8;
`;

const FormulaInput = styled.input`
  flex: 1;
  margin: 4px 4px 0 0;
  padding: 0 8px 5px;
  border-radius: 4px 0 0 0;
  background: #373737;
  color: #f4f4f4;
  font-size: 14px;
`;

const SheetArea = styled.section`
  position: relative;
  flex: 1;
  min-height: 0;
  overflow: hidden;
  background: #ffffff;
`;

const SheetTable = styled.table`
  width: 100%;
  table-layout: fixed;
  border-collapse: separate;
  border-spacing: 0;
  font-family: ${CELL_FONT};
  font-size: 14px;
  line-height: 18px;
  color: #111111;
  white-space: nowrap;

  th,
  td {
    padding: 0;
  }
`;

const Corner = styled.th`
  height: 25px;
  background: #161616;
  border-bottom: 1px solid #bdbdbd;
  border-right: 1px solid #bdbdbd;
`;

const ColumnHead = styled.th`
  height: 25px;
  border-right: ${(p) => (p.$last ? "2px solid #35724f" : "1px solid #555555")};
  border-bottom: 1px solid ${(p) => (p.$selected ? "#457a5c" : "#bdbdbd")};
  background: ${(p) => (p.$selected ? "#575757" : "#161616")};
  color: #f0f0f0;
  font-family: ${UI_FONT};
  font-size: 11px;
  font-weight: 600;
`;

const RowHead = styled.th`
  background: ${(p) => (p.$selected ? "#575757" : "#161616")};
  border-bottom: 1px solid #4a4a4a;
  border-right: 1px solid ${(p) => (p.$selected ? "#35724f" : "#2a2a2a")};
  color: #f0f0f0;
  font-family: ${UI_FONT};
  font-size: 11px;
  font-weight: 600;
  line-height: 13px;
  vertical-align: bottom;
`;

const Row = styled.tr`
  height: ${(p) => {
    if (p.$number === 2) return 19;
    return p.$number % 4 === 3 ? 21 : 20;
  }}px;
`;

const BannerRow = styled.tr`
  height: 34px;

  td {
    border-bottom: 1px solid #9c9c9c;
    background: #457c5d;
    color: #ffffff;
    font-size: 22px;
    font-weight: 700;
    line-height: 26px;
  }

  td + td {
    padding-left: 5px;
  }

  td:last-child {
    background: #ffffff;
  }
`;

const YearRow = styled.tr`
  height: 21px;
`;

const YearCell = styled.td`
  position: relative;
  background: ${(p) => (p.$selected ? "#437f5f" : "#59a67c")};
  color: ${(p) => (p.$selected ? "#b9cbc1" : "#ffffff")};
  font-weight: 700;
  text-align: ${(p) => (p.$center ? "center" : "right")};

  && {
    padding-right: ${(p) => (p.$center ? "0" : "3px")};
  }
`;

/* marquee over the five year cells, with its fill handle */
const Selection = styled.span`
  position: absolute;
  z-index: 1;
  top: -1px;
  left: -1px;
  width: calc(500% + 3px);
  height: calc(100% + 2px);
  border: 2px solid #33704e;
  box-shadow: inset 0 0 0 1px #dcefe4;

  &::after {
    content: "";
    position: absolute;
    right: -4px;
    bottom: -4px;
    width: 7px;
    height: 7px;
    border: 1px solid #ffffff;
    border-width: 1px 0 0 1px;
    background: #33704e;
  }
`;

const paddings = {
  positive: "8px",
  negative: "3px",
  dash: "4px",
  center: "0",
};

const ruled = (kind) => kind === "subtotal" || kind === "total";

const Cell = styled.td`
  background: ${(p) => (p.$kind === "total" ? "#d6f0dc" : "transparent")};
  border: 0 solid #5f8f79;
  border-width: ${(p) => (ruled(p.$kind) ? "1px 0" : "0")};
  border-left-width: ${(p) => (ruled(p.$kind) && p.$first ? "1px" : "0")};
  border-right-width: ${(p) => (p.$kind === "total" && p.$last ? "1px" : "0")};
  font-weight: ${(p) => (ruled(p.$kind) ? 700 : 400)};
  text-decoration: ${(p) => (p.$kind === "heading" ? "underline" : "none")};
  text-underline-offset: 2px;
  text-align: ${(p) => {
    if (p.$align === "center") return "center";
    return p.$align ? "right" : "left";
  }};

  && {
    padding-left: ${(p) => (p.$first ? (ruled(p.$kind) ? "2px" : "3px") : "0")};
    padding-right: ${(p) => paddings[p.$align] || "0"};
  }
`;

const Chart = styled.svg`
  position: absolute;
  top: 75px;
  left: 893px;
  width: 660px;
  height: 480px;
  font-family: ${CELL_FONT};

  line {
    stroke: #d9d9d9;
    stroke-width: 1;
  }

  path {
    fill: none;
    stroke: #467d62;
    stroke-width: 2.5;
    stroke-linejoin: round;
    stroke-linecap: round;
  }

  text {
    fill: #595959;
    text-anchor: end;
  }

  .amount {
    font-size: 14px;
  }

  .month {
    font-size: 10px;
  }
`;

const VerticalScroll = styled.div`
  position: absolute;
  top: 28px;
  right: 2px;
  width: 8px;
  height: 660px;
  border-radius: 4px;
  background: #c9c9c9;
`;

const HorizontalScroll = styled.div`
  position: absolute;
  left: 27px;
  right: 19px;
  bottom: 4px;
  height: 8px;
  border-radius: 4px;
  background: #cbcbcb;
`;

const SheetBar = styled.div`
  height: 30px;
  flex: none;
  display: flex;
  border-top: 1px solid #6a6a6a;
  border-bottom: 2px solid #1f1f1f;
  background: #2e2e2e;
  overflow: hidden;
`;

const SheetNav = styled.div`
  width: 67px;
  flex: none;
  display: flex;
  align-items: center;
  justify-content: center;
  gap: 16px;
`;

const tones = {
  black: ["#000000", "#f2f2f2"],
  dark: ["#447d5e", "#f2f2f2"],
  mid: ["#8fd59b", "#0c1f12"],
  light: ["#d5f2da", "#0c1f12"],
  active: ["linear-gradient(#ffffff, #c9e8d4)", "#4f8a68"],
};

const SheetTab = styled.button`
  min-width: 89px;
  flex: none;
  padding: 0 ${(p) => (p.$roomy ? "17px" : "16px")} 1px;
  border: 3px solid ${(p) => (p.$tone === "active" ? "#ffffff" : "#1f1f1f")};
  border-left-width: 4px;
  box-shadow: -1px 0 0 #505050;
  background: ${(p) => tones[p.$tone][0]} padding-box;
  color: ${(p) => tones[p.$tone][1]};
  font-family: ${CELL_FONT};
  font-size: 13px;
  font-weight: 700;
  white-space: nowrap;
`;

const AddSheet = styled.button`
  width: 43px;
  display: flex;
  align-items: center;
  justify-content: center;
  border: 1px solid #555555;
  border-width: 0 1px;
`;

const StatusBar = styled.footer`
  height: 25px;
  flex: none;
  display: flex;
  align-items: center;
  padding: 0 27px 1px;
  background: linear-gradient(#494949, #404040);
  font-size: 13px;
`;

const StatusButton = styled.button`
  display: flex;
  align-items: center;
  gap: 4px;
  margin-left: 21px;
`;

const Stats = styled.div`
  display: flex;
  gap: 26px;
  margin-right: 12px;
`;

const ViewButton = styled.button`
  width: 41px;
  height: 25px;
  display: flex;
  align-items: center;
  justify-content: center;
  background: ${(p) => (p.$active ? "#5c5c5c" : "none")};
`;

const ZoomControl = styled.div`
  display: flex;
  align-items: center;
  gap: 7px;
  margin-left: 8px;

  input {
    appearance: none;
    width: 113px;
    height: 5px;
    border-radius: 3px;
    background: #6e6e6e;
  }

  input::-webkit-slider-thumb {
    appearance: none;
    width: 18px;
    height: 18px;
    border-radius: 50%;
    background: #a2a2a2;
  }
`;

const ZoomValue = styled.span`
  width: 54px;
  text-align: right;
`;
